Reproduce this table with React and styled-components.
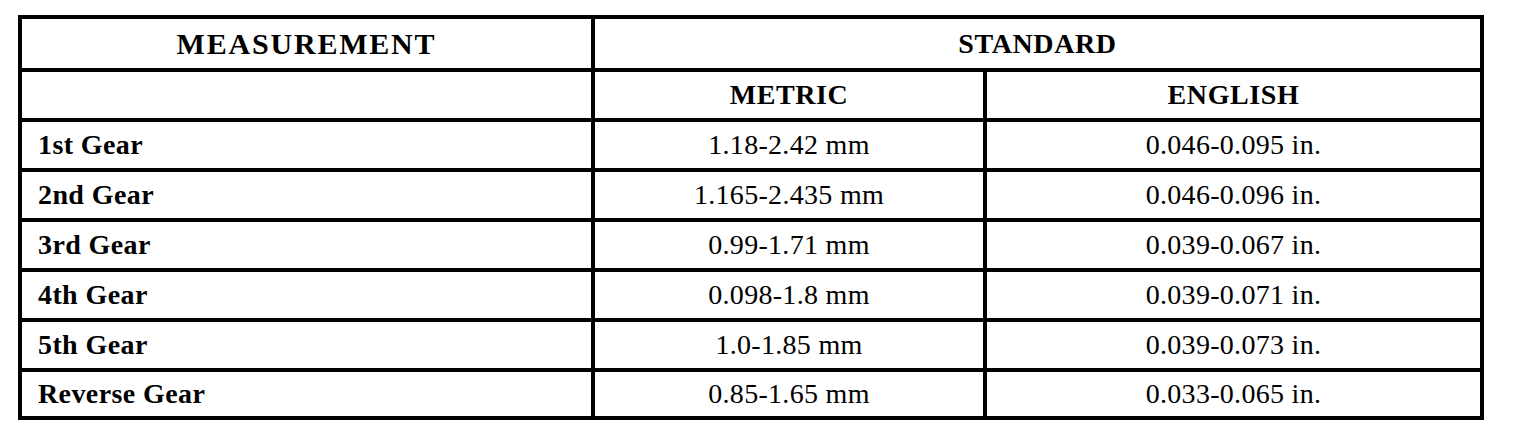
import styled, { createGlobalStyle } from "styled-components"

const GlobalStyle = createGlobalStyle`
    body {
        margin: 0;
        background: #ffffff;
        font-family: 'Liberation Serif', 'Times New Roman', serif;
        color: #000000;
    }
`;

const rows = [
    { label: "1st Gear", metric: "1.18-2.42 mm", english: "0.046-0.095 in." },
    { label: "2nd Gear", metric: "1.165-2.435 mm", english: "0.046-0.096 in." },
    { label: "3rd Gear", metric: "0.99-1.71 mm", english: "0.039-0.067 in." },
    { label: "4th Gear", metric: "0.098-1.8 mm", english: "0.039-0.071 in." },
    { label: "5th Gear", metric: "1.0-1.85 mm", english: "0.039-0.073 in." },
    { label: "Reverse Gear", metric: "0.85-1.65 mm", english: "0.033-0.065 in." },
];

export default function App () {
    return (
        <Page>
            <GlobalStyle />
            <SpecTable>
                <colgroup>
                    <col style={{ width: "573px" }} />
                    <col style={{ width: "392px" }} />
                    <col />
                </colgroup>
                <thead>
                    <HeadRow height={53}>
                        <HeadCell wide>MEASUREMENT</HeadCell>
                        <HeadCell colSpan={2}>STANDARD</HeadCell>
                    </HeadRow>
                    <HeadRow height={50}>
                        <HeadCell />
                        <HeadCell>METRIC</HeadCell>
                        <HeadCell>ENGLISH</HeadCell>
                    </HeadRow>
                </thead>
                <tbody>
                    {rows.map((row, index) => (
                        <BodyRow key={index} height={index === rows.length - 1 ? 48 : 50}>
                            <LabelCell>{row.label}</LabelCell>
                            <ValueCell>{row.metric}</ValueCell>
                            <ValueCell>{row.english}</ValueCell>
                        </BodyRow>
                    ))}
                </tbody>
            </SpecTable>
        </Page>
    )
}

const Page = styled.div`
    width: 1536px;
    height: 438px;
    padding: 15px 0 0 18px;
    box-sizing: border-box;
`;

const SpecTable = styled.table`
    width: 1466px;
    border-collapse: collapse;
    table-layout: fixed;
    border: 4px solid #000;
    font-size: 28px;
`;

const HeadRow = styled.tr`
    height: ${props => props.height}px;
`;

const BodyRow = styled.tr`
    height: ${props => props.height}px;
`;

const HeadCell = styled.th`
    border: 4px solid #000;
    padding: 0;
    text-align: center;
    vertical-align: middle;
    font-weight: 700;
    font-size: ${props => props.wide ? "30px" : "28px"};
    letter-spacing: ${props => props.wide ? "1.8px" : "0.6px"};
`;

const LabelCell = styled.td`
    border: 4px solid #000;
    padding: 0 0 0 16px;
    font-weight: 700;
    text-align: left;
    vertical-align: middle;
    letter-spacing: 0.4px;
`;

const ValueCell = styled.td`
    border: 4px solid #000;
    padding: 0;
    text-align: center;
    vertical-align: middle;
    letter-spacing: 0.3px;
`;
